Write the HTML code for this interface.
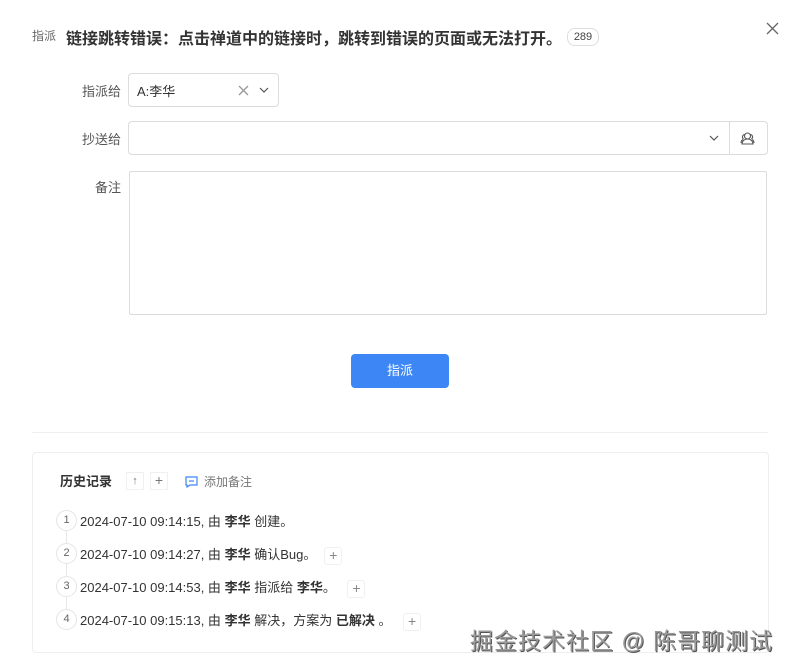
<!DOCTYPE html>
<html><head><meta charset="utf-8"><style>
body{margin:0;width:796px;height:672px;background:#fff;font-family:"Liberation Sans","Noto Sans CJK SC",sans-serif;color:#333;position:relative;overflow:hidden}
.a{position:absolute;white-space:nowrap}
.lbl{font-size:13px;color:#555;text-align:right;width:60px}
.box{position:absolute;border:1px solid #dcdcdc;border-radius:4px;box-sizing:border-box;background:#fff}
.it{font-size:13px;color:#333}
.it b{font-weight:bold}
.num{position:absolute;left:56px;width:21px;height:21px;box-sizing:border-box;border:1px solid #e5e5e5;border-radius:50%;font-size:11px;color:#666;text-align:center;line-height:19px;background:#fff}
.pl{display:inline-block;width:16px;height:16px;border:1px solid #f0f0f0;border-radius:3px;text-align:center;line-height:15px;color:#888;font-size:14px;vertical-align:middle;margin-left:8px}
</style></head><body>
<div class="a" style="left:32px;top:27px;font-size:12px;color:#666">指派</div>
<div class="a" style="left:66px;top:25px;font-size:16px;font-weight:bold;color:#333">链接跳转错误：点击禅道中的链接时，跳转到错误的页面或无法打开。</div>
<div class="a" style="left:567px;top:28px;width:30px;height:16px;border:1px solid #ddd;border-radius:8px;font-size:11px;text-align:center;line-height:16px;color:#444">289</div>
<svg class="a" style="left:766px;top:22px" width="13" height="13"><path d="M1 1L12 12M12 1L1 12" stroke="#666" stroke-width="1.3"/></svg>

<div class="a lbl" style="left:61px;top:81px">指派给</div>
<div class="box" style="left:128px;top:73px;width:151px;height:34px"></div>
<div class="a" style="left:137px;top:81px;font-size:13px;color:#333">A:李华</div>
<svg class="a" style="left:238px;top:85px" width="11" height="11"><path d="M1 1L10 10M10 1L1 10" stroke="#999" stroke-width="1.3"/></svg>
<svg class="a" style="left:259px;top:87px" width="10" height="7"><path d="M1 1L5 5L9 1" stroke="#555" fill="none" stroke-width="1.2"/></svg>

<div class="a lbl" style="left:61px;top:129px">抄送给</div>
<div class="box" style="left:128px;top:121px;width:640px;height:34px;border-radius:4px"></div>
<div class="a" style="left:729px;top:122px;width:1px;height:32px;background:#dcdcdc"></div>
<svg class="a" style="left:709px;top:135px" width="10" height="7"><path d="M1 1L5 5L9 1" stroke="#555" fill="none" stroke-width="1.2"/></svg>
<svg class="a" style="left:740px;top:131px" width="15" height="14" fill="none" stroke="#555" stroke-width="1.1"><circle cx="7.5" cy="5" r="3"/><path d="M2 13c0-3 2.5-5 5.5-5s5.5 2 5.5 5z"/><path d="M4.5 3.5a2.5 2.5 0 0 0-1 4.5M10.5 3.5a2.5 2.5 0 0 1 1 4.5M1 12c0-2 1-3 2-3.5M14 12c0-2-1-3-2-3.5"/></svg>

<div class="a lbl" style="left:61px;top:177px">备注</div>
<div class="box" style="left:129px;top:171px;width:638px;height:144px;border-radius:2px"></div>

<div class="a" style="left:351px;top:354px;width:98px;height:34px;background:#3d86f5;border-radius:4px;color:#fff;font-size:13px;text-align:center;line-height:34px">指派</div>

<div class="a" style="left:32px;top:432px;width:736px;height:1px;background:#eee"></div>
<div class="box" style="left:32px;top:452px;width:737px;height:201px;border-color:#eee"></div>

<div class="a" style="left:60px;top:471px;font-size:13px;font-weight:bold;color:#333">历史记录</div>
<div class="a" style="left:126px;top:472px;width:16px;height:16px;border:1px solid #f0f0f0;font-size:11px;color:#777;text-align:center;line-height:16px">↑</div>
<div class="a" style="left:150px;top:472px;width:16px;height:16px;border:1px solid #f0f0f0;font-size:14px;color:#777;text-align:center;line-height:15px">+</div>
<svg class="a" style="left:185px;top:476px" width="13" height="12" fill="none" stroke="#3d86f5" stroke-width="1.2"><path d="M1 1h11v8H5l-3 2V9H1z"/><path d="M4 5h5" /></svg>
<div class="a" style="left:204px;top:473px;font-size:12px;color:#777">添加备注</div>

<div class="a" style="left:66px;top:530px;width:1px;height:80px;background:#e8e8e8"></div>
<div class="num" style="top:510px">1</div>
<div class="a it" style="left:80px;top:511px">2024-07-10 09:14:15, 由 <b>李华</b> 创建。</div>
<div class="num" style="top:543px">2</div>
<div class="a it" style="left:80px;top:544px">2024-07-10 09:14:27, 由 <b>李华</b> 确认Bug。<span class="pl">+</span></div>
<div class="num" style="top:576px">3</div>
<div class="a it" style="left:80px;top:577px">2024-07-10 09:14:53, 由 <b>李华</b> 指派给 <b>李华</b>。 <span class="pl">+</span></div>
<div class="num" style="top:609px">4</div>
<div class="a it" style="left:80px;top:610px">2024-07-10 09:15:13, 由 <b>李华</b> 解决，方案为 <b>已解决</b> 。 <span class="pl">+</span></div>

<div class="a" style="left:470px;top:622px;font-size:23px;font-weight:normal;letter-spacing:1px;color:#9a9a9a;text-shadow:1px 1px 0 #555, -1px -1px 0 #fff">掘金技术社区 @ 陈哥聊测试</div>
</body></html>
